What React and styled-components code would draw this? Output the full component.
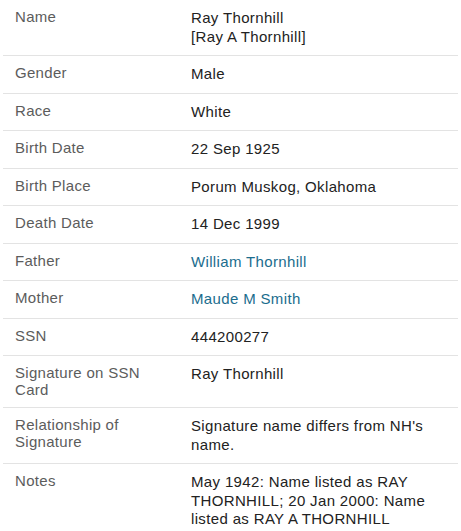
import styled, { createGlobalStyle } from "styled-components";

const GlobalStyle = createGlobalStyle`
  body {
    margin: 0;
    background: #fff;
    font-family: "Liberation Sans", Arial, sans-serif;
  }
`;

const Wrapper = styled.div`
  padding: 0 3px;
`;
const Table = styled.table`
  width: 100%;
  border-collapse: collapse;
`;
const Row = styled.tr`
  border-bottom: 1px solid #e3e3e3;
  &:last-child {
    border-bottom: none;
  }
`;
const Label = styled.th`
  width: 152px;
  padding: 9px 12px;
  text-align: left;
  vertical-align: top;
  font-weight: normal;
  font-size: 15px;
  line-height: 16.5px;
  letter-spacing: 0.3px;
  color: #5c5c5c;
`;
const Value = styled.td`
  padding: 9px 12px;
  vertical-align: top;
  font-size: 15px;
  line-height: 18.5px;
  letter-spacing: 0.35px;
  color: #222;
`;
const Link = styled.a`
  color: #1b6d8e;
  text-decoration: none;
`;

const rows = [
  ["Name", <>Ray Thornhill<br />[Ray A Thornhill]</>],
  ["Gender", "Male"],
  ["Race", "White"],
  ["Birth Date", "22 Sep 1925"],
  ["Birth Place", "Porum Muskog, Oklahoma"],
  ["Death Date", "14 Dec 1999"],
  ["Father", <Link href="#">William Thornhill</Link>],
  ["Mother", <Link href="#">Maude M Smith</Link>],
  ["SSN", "444200277"],
  ["Signature on SSN Card", "Ray Thornhill"],
  ["Relationship of Signature", "Signature name differs from NH's name."],
  [
    "Notes",
    "May 1942: Name listed as RAY THORNHILL; 20 Jan 2000: Name listed as RAY A THORNHILL",
  ],
];

const App = () => {
  return (
    <Wrapper>
      <GlobalStyle />
      <Table>
        <tbody>
          {rows.map(([label, value]) => (
            <Row key={label}>
              <Label>{label}</Label>
              <Value>{value}</Value>
            </Row>
          ))}
        </tbody>
      </Table>
    </Wrapper>
  );
};

export default App;
